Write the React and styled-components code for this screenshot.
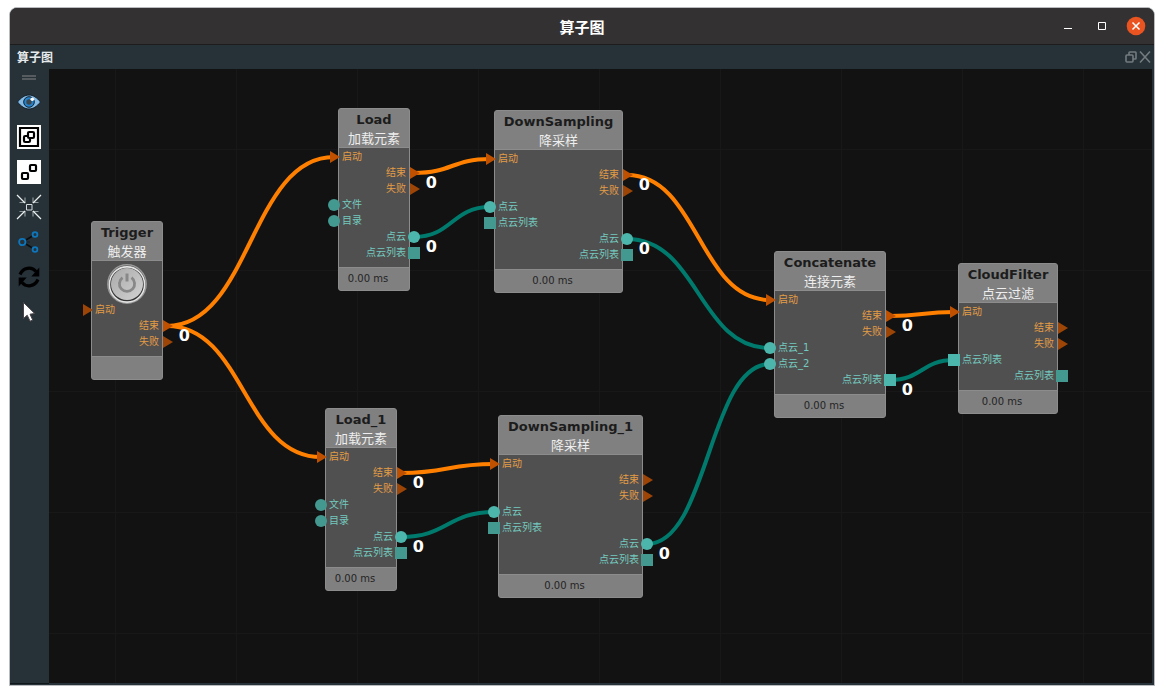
import React from "react";
import styled, { createGlobalStyle, css } from "styled-components";

const GlobalStyle = createGlobalStyle`
  *, *::before, *::after { box-sizing: border-box; }
  body {
    margin: 0;
    background: #ffffff;
    font-family: "DejaVu Sans", "Noto Sans CJK SC", sans-serif;
  }
  button { padding: 0; border: 0; background: none; font: inherit; color: inherit; cursor: pointer; }
`;

const Page = styled.div`
  min-height: 100vh;
  display: flex;
  padding: 7px 9px 9px;
`;

const Window = styled.main`
  flex: 1;
  min-width: 0;
  display: flex;
  flex-direction: column;
  overflow: hidden;
  border: 1px solid #b9bbbe;
  border-radius: 8px 8px 0 0;
  background: #263238;
`;

const TitleBar = styled.header`
  display: grid;
  grid-template-columns: 1fr auto 1fr;
  align-items: center;
  height: 37px;
  padding: 0 8px;
  background: #343132;
  border-bottom: 1px solid #1e1c1d;
`;

const WindowTitle = styled.h1`
  grid-column: 2;
  margin: 0;
  padding-top: 1px;
  color: #ffffff;
  font: 700 15px/20px "Noto Sans CJK SC", sans-serif;
`;

const WindowControls = styled.div`
  display: flex;
  justify-content: flex-end;
  gap: 14px;
`;

const IconButton = styled.button`
  width: ${(p) => p.$size}px;
  height: ${(p) => p.$size}px;
  svg { display: block; overflow: visible; }
`;

const DockBar = styled.div`
  display: flex;
  align-items: center;
  justify-content: space-between;
  height: 24px;
  padding: 0 3px 0 7px;
`;

const DockTitle = styled.h2`
  margin: 0;
  color: #e6eaec;
  font: 700 12px/18px "Noto Sans CJK SC", sans-serif;
`;

const DockControls = styled.div`
  display: flex;
  gap: 2px;
`;

const Workspace = styled.div`
  flex: 1;
  display: flex;
  padding: 0 2px 1px 0;
`;

const Toolbar = styled.nav`
  display: flex;
  flex-direction: column;
  align-items: center;
  gap: 11px;
  width: 39px;
  padding: 6px 1px 0 0;
  border-bottom: 1px solid #10171b;
`;

const Grip = styled.span`
  width: 14px;
  height: 5px;
  margin-bottom: -1px;
  border: solid #555b5e;
  border-width: 2px 0;
`;

const Canvas = styled.section`
  position: relative;
  flex: 1;
  min-height: 560px;
  margin-bottom: 1px;
  overflow: hidden;
  background-color: #121212;
  background-image: linear-gradient(#181818 1px, transparent 1px),
    linear-gradient(90deg, #181818 1px, transparent 1px);
  background-size: 121px 121px;
  background-position: 66px 80px;
`;

const Wires = styled.svg`
  position: absolute;
  inset: 0;
  width: 100%;
  height: 100%;
  fill: none;
  stroke-width: 4;
`;

const NodeCard = styled.article`
  position: absolute;
  left: ${(p) => p.$x}px;
  top: ${(p) => p.$y}px;
  width: ${(p) => p.$width}px;
  border: 1px solid #8c8c8c;
  border-radius: 3px;
  background: #808080;
`;

const NodeHeader = styled.header`
  height: 38px;
  display: flex;
  flex-direction: column;
  align-items: center;
  white-space: nowrap;
`;

const NodeName = styled.h3`
  margin: 0;
  color: #1c1c1c;
  font: 700 13px/21px "DejaVu Sans", sans-serif;
`;

const NodeKind = styled.p`
  margin: 0;
  color: #eeeeee;
  font: 400 13px/16px "Noto Sans CJK SC", sans-serif;
`;

const NodeBody = styled.div`
  padding-bottom: 7px;
  border-top: 1px solid #8c8c8c;
  background: #505050;
`;

const PowerArea = styled.div`
  display: flex;
  justify-content: center;
  height: 40px;
  padding-top: 3px;
`;

const PortRow = styled.div`
  position: relative;
  display: flex;
  height: 16px;
  padding: 0 3px;
  justify-content: ${(p) => (p.$side === "in" ? "flex-start" : "flex-end")};
  color: ${(p) => (p.$shape === "flow" ? "#e39c46" : "#74cabf")};
  font: 400 10px/18px "DejaVu Sans", "Noto Sans CJK SC", sans-serif;
  white-space: nowrap;
`;

const shapes = {
  flow: css`
    width: 10px;
    clip-path: polygon(0 0, 100% 50%, 0 100%);
    background: ${(p) => (p.$linked ? "#bf5000" : "#9c4507")};
    ${(p) => (p.$side === "in" ? "left: -9px;" : "right: -11px;")}
  `,
  point: css`
    border-radius: 50%;
    background: ${(p) => (p.$linked ? "#4db6ac" : "#439890")};
    ${(p) => (p.$side === "in" ? "left: -11px;" : "right: -11px;")}
  `,
  list: css`
    background: ${(p) => (p.$linked ? "#4db6ac" : "#439890")};
    ${(p) => (p.$side === "in" ? "left: -11px;" : "right: -11px;")}
  `,
};

const Port = styled.span`
  position: absolute;
  top: 3px;
  width: 12px;
  height: 12px;
  ${(p) => shapes[p.$shape]}
`;

const Count = styled.span`
  position: absolute;
  top: 9px;
  right: -28px;
  color: #ffffff;
  font: 700 16px/20px "DejaVu Sans", sans-serif;
`;

const NodeFooter = styled.footer`
  height: 23px;
  padding-right: 12px;
  border-top: 1px solid #8c8c8c;
  color: #242424;
  font: 400 10px/21px "DejaVu Sans", sans-serif;
  text-align: center;
`;

/* [label, side, shape, linked, count] */
const start = ["启动", "in", "flow", true];
const startFree = ["启动", "in", "flow", false];
const done = ["结束", "out", "flow", true, "0"];
const doneFree = ["结束", "out", "flow", false];
const failed = ["失败", "out", "flow", false];

const loadPorts = [
  start, done, failed,
  ["文件", "in", "point", false],
  ["目录", "in", "point", false],
  ["点云", "out", "point", true, "0"],
  ["点云列表", "out", "list", false],
];

const samplingPorts = (end) => [
  start, end, failed,
  ["点云", "in", "point", true],
  ["点云列表", "in", "list", false],
  ["点云", "out", "point", true, "0"],
  ["点云列表", "out", "list", false],
];

const nodes = {
  trigger: { name: "Trigger", kind: "触发器", x: 42, y: 152, width: 72, power: true, ports: [startFree, done, failed] },
  load: { name: "Load", kind: "加载元素", x: 289, y: 39, width: 72, time: "0.00 ms", ports: loadPorts },
  down: { name: "DownSampling", kind: "降采样", x: 445, y: 41, width: 129, time: "0.00 ms", ports: samplingPorts(done) },
  load1: { name: "Load_1", kind: "加载元素", x: 276, y: 339, width: 72, time: "0.00 ms", ports: loadPorts },
  down1: { name: "DownSampling_1", kind: "降采样", x: 449, y: 346, width: 145, time: "0.00 ms", ports: samplingPorts(doneFree) },
  concat: {
    name: "Concatenate", kind: "连接元素", x: 725, y: 182, width: 112, time: "0.00 ms",
    ports: [
      start, done, failed,
      ["点云_1", "in", "point", true],
      ["点云_2", "in", "point", true],
      ["点云列表", "out", "list", true, "0"],
    ],
  },
  filter: {
    name: "CloudFilter", kind: "点云过滤", x: 909, y: 194, width: 100, time: "0.00 ms",
    ports: [
      start, doneFree, failed,
      ["点云列表", "in", "list", true],
      ["点云列表", "out", "list", false],
    ],
  },
};

/* [from node, port index, to node, port index] */
const links = [
  ["trigger", 1, "load", 0],
  ["trigger", 1, "load1", 0],
  ["load", 1, "down", 0],
  ["load", 5, "down", 3],
  ["load1", 1, "down1", 0],
  ["load1", 5, "down1", 3],
  ["down", 1, "concat", 0],
  ["down", 5, "concat", 3],
  ["down1", 5, "concat", 4],
  ["concat", 1, "filter", 0],
  ["concat", 5, "filter", 3],
];

function anchor(id, index) {
  const node = nodes[id];
  const side = node.ports[index][1];
  return {
    x: side === "in" ? node.x - 4 : node.x + node.width + 4,
    y: node.y + 49 + (node.power ? 40 : 0) + index * 16,
  };
}

function Wire({ link: [from, out, to, into] }) {
  const a = anchor(from, out);
  const b = anchor(to, into);
  const mid = (a.x + b.x) / 2;
  const color = nodes[from].ports[out][2] === "flow" ? "#ff8000" : "#007a6c";
  return <path d={`M${a.x} ${a.y}C${mid} ${a.y} ${mid} ${b.y} ${b.x} ${b.y}`} stroke={color} />;
}

function PowerIcon() {
  return (
    <svg width="40" height="40" viewBox="0 0 40 40">
      <defs>
        <linearGradient id="knob" x1="0" y1="0" x2="1" y2="1">
          <stop offset="0" stopColor="#a9a9a9" />
          <stop offset="1" stopColor="#d2d2d2" />
        </linearGradient>
      </defs>
      <circle cx="20" cy="20" r="19.2" fill="#4a4a4a" stroke="#999" strokeWidth="1.4" />
      <circle cx="20" cy="20.5" r="17.6" fill="#353535" stroke="#e4e4e4" strokeWidth="1.6" />
      <circle cx="20" cy="20" r="16" fill="url(#knob)" />
      <path d="M15.500 13.700a7.600 7.600 0 1 0 9 0" fill="none" stroke="#888" strokeWidth="2.800" />
      <path d="M20 9.500v8" stroke="#888" strokeWidth="3" />
    </svg>
  );
}

function GraphNode({ node }) {
  return (
    <NodeCard $x={node.x} $y={node.y} $width={node.width}>
      <NodeHeader>
        <NodeName>{node.name}</NodeName>
        <NodeKind>{node.kind}</NodeKind>
      </NodeHeader>
      <NodeBody>
        {node.power && (
          <PowerArea>
            <IconButton $size={40} aria-label="触发">
              <PowerIcon />
            </IconButton>
          </PowerArea>
        )}
        {node.ports.map(([label, side, shape, linked, count], i) => (
          <PortRow key={i} $side={side} $shape={shape}>
            {label}
            <Port $side={side} $shape={shape} $linked={linked} />
            {count && <Count>{count}</Count>}
          </PortRow>
        ))}
      </NodeBody>
      <NodeFooter>{node.time}</NodeFooter>
    </NodeCard>
  );
}

const tools = [
  ["显示", (
    <>
      <path d="M.5 12C4 7.500 8 5 12 5s8 2.500 11.500 7C20 16.500 16 19 12 19S4 16.500 .5 12z" fill="#84bbe6" stroke="#14202a" strokeWidth="1" />
      <circle cx="12" cy="12" r="5.300" fill="#2382cb" stroke="#11202c" strokeWidth="1" />
      <circle cx="12" cy="12" r="2.700" fill="#3c464c" />
      <circle cx="15.300" cy="9.300" r="1.800" fill="#fff" />
    </>
  )],
  ["组合", (
    <>
      <path d="M0 0h24v24H0z" fill="#fff" />
      <g fill="#fff" stroke="#000" strokeWidth="2.200">
        <path d="M3 3h18v18H3z" />
        <rect x="7" y="11" width="6" height="6" rx="1.200" />
        <rect x="11" y="7" width="6" height="6" rx="1.200" />
      </g>
    </>
  )],
  ["拆分", (
    <>
      <path d="M0 0h24v24H0z" fill="#fff" />
      <g fill="#fff" stroke="#000" strokeWidth="2.200">
        <rect x="5" y="13" width="6" height="6" rx="1" />
        <rect x="13" y="5" width="6" height="6" rx="1" />
      </g>
    </>
  )],
  ["居中", (
    <g fill="none">
      <path d="M2.500 7.500H8V2.500M21.500 7.500H16V2.500M2.500 16.500H8v5M21.500 16.500H16v5" stroke="#8e979a" strokeWidth="1.200" />
      <path d="M0 0l8 8M24 0l-8 8M0 24l8-8M24 24l-8-8" stroke="#edf0f1" strokeWidth="1.200" />
      <path d="M9.500 9.500h5.500v5.500h-5.500z" stroke="#d5dadc" />
    </g>
  )],
  ["连接", (
    <g fill="none">
      <path d="M8 10.500l7.500-4.500M8 13.500l7.500 4.500" stroke="#0b0e10" strokeWidth="1.500" />
      <path d="M9.500 12h4" stroke="#0b0e10" strokeDasharray="1 1" />
      <g stroke="#0d76bd" strokeWidth="1.800">
        <circle cx="5.300" cy="12" r="3.200" />
        <circle cx="18" cy="4.500" r="2.400" />
        <circle cx="18" cy="19.500" r="2.400" />
      </g>
    </g>
  )],
  ["刷新", (
    <>
      <path d="M3 9.500C6 2.500 14.500 1.200 19 6.500M21 14.500C18 21.500 9.500 22.800 5 17.500" fill="none" stroke="#000" strokeWidth="3.200" />
      <path d="M22.300 2.500v9h-8zM1.700 21.500v-9h8z" fill="#000" />
    </>
  )],
  ["选择", (
    <path d="M6.500 2.500v16l3.700-3.300 2.900 6 2.600-1.200-2.700-5.800 4.700-.7z" fill="#fff" stroke="#4b4348" strokeWidth="1" />
  )],
];

export default function App() {
  return (
    <>
      <GlobalStyle />
      <Page>
        <Window>
          <TitleBar>
            <WindowTitle>算子图</WindowTitle>
            <WindowControls>
              <IconButton $size={20} aria-label="最小化">
                <svg width="20" height="20"><path d="M6 12.500h8" stroke="#fff" /></svg>
              </IconButton>
              <IconButton $size={20} aria-label="最大化">
                <svg width="20" height="20"><path d="M6.500 6.500h7v7h-7z" fill="none" stroke="#fff" /></svg>
              </IconButton>
              <IconButton $size={20} aria-label="关闭">
                <svg width="20" height="20">
                  <circle cx="10" cy="10" r="9.300" fill="#e95420" />
                  <path d="M6.500 6.500l7 7M13.500 6.500l-7 7" stroke="#fff" strokeWidth="1.500" />
                </svg>
              </IconButton>
            </WindowControls>
          </TitleBar>
          <DockBar>
            <DockTitle>算子图</DockTitle>
            <DockControls>
              <IconButton $size={12} aria-label="浮动">
                <svg width="12" height="12" fill="none" stroke="#737b7f" strokeWidth="1.600">
                  <rect x="1" y="4" width="7" height="7" rx="1" />
                  <path d="M4 4V1.700q0-.7.700-.7h5.600q.7 0 .7.700v5.600q0 .7-.7.700H8" />
                </svg>
              </IconButton>
              <IconButton $size={12} aria-label="关闭面板">
                <svg width="12" height="12"><path d="M1 .5l10 11M11 .5l-10 11" stroke="#737b7f" strokeWidth="1.600" /></svg>
              </IconButton>
            </DockControls>
          </DockBar>
          <Workspace>
            <Toolbar>
              <Grip />
              {tools.map(([label, icon]) => (
                <IconButton key={label} $size={24} aria-label={label}>
                  <svg width="24" height="24" viewBox="0 0 24 24">{icon}</svg>
                </IconButton>
              ))}
            </Toolbar>
            <Canvas>
              <Wires>
                {links.map((link) => <Wire key={link.join("-")} link={link} />)}
              </Wires>
              {Object.entries(nodes).map(([id, node]) => <GraphNode key={id} node={node} />)}
            </Canvas>
          </Workspace>
        </Window>
      </Page>
    </>
  );
}
